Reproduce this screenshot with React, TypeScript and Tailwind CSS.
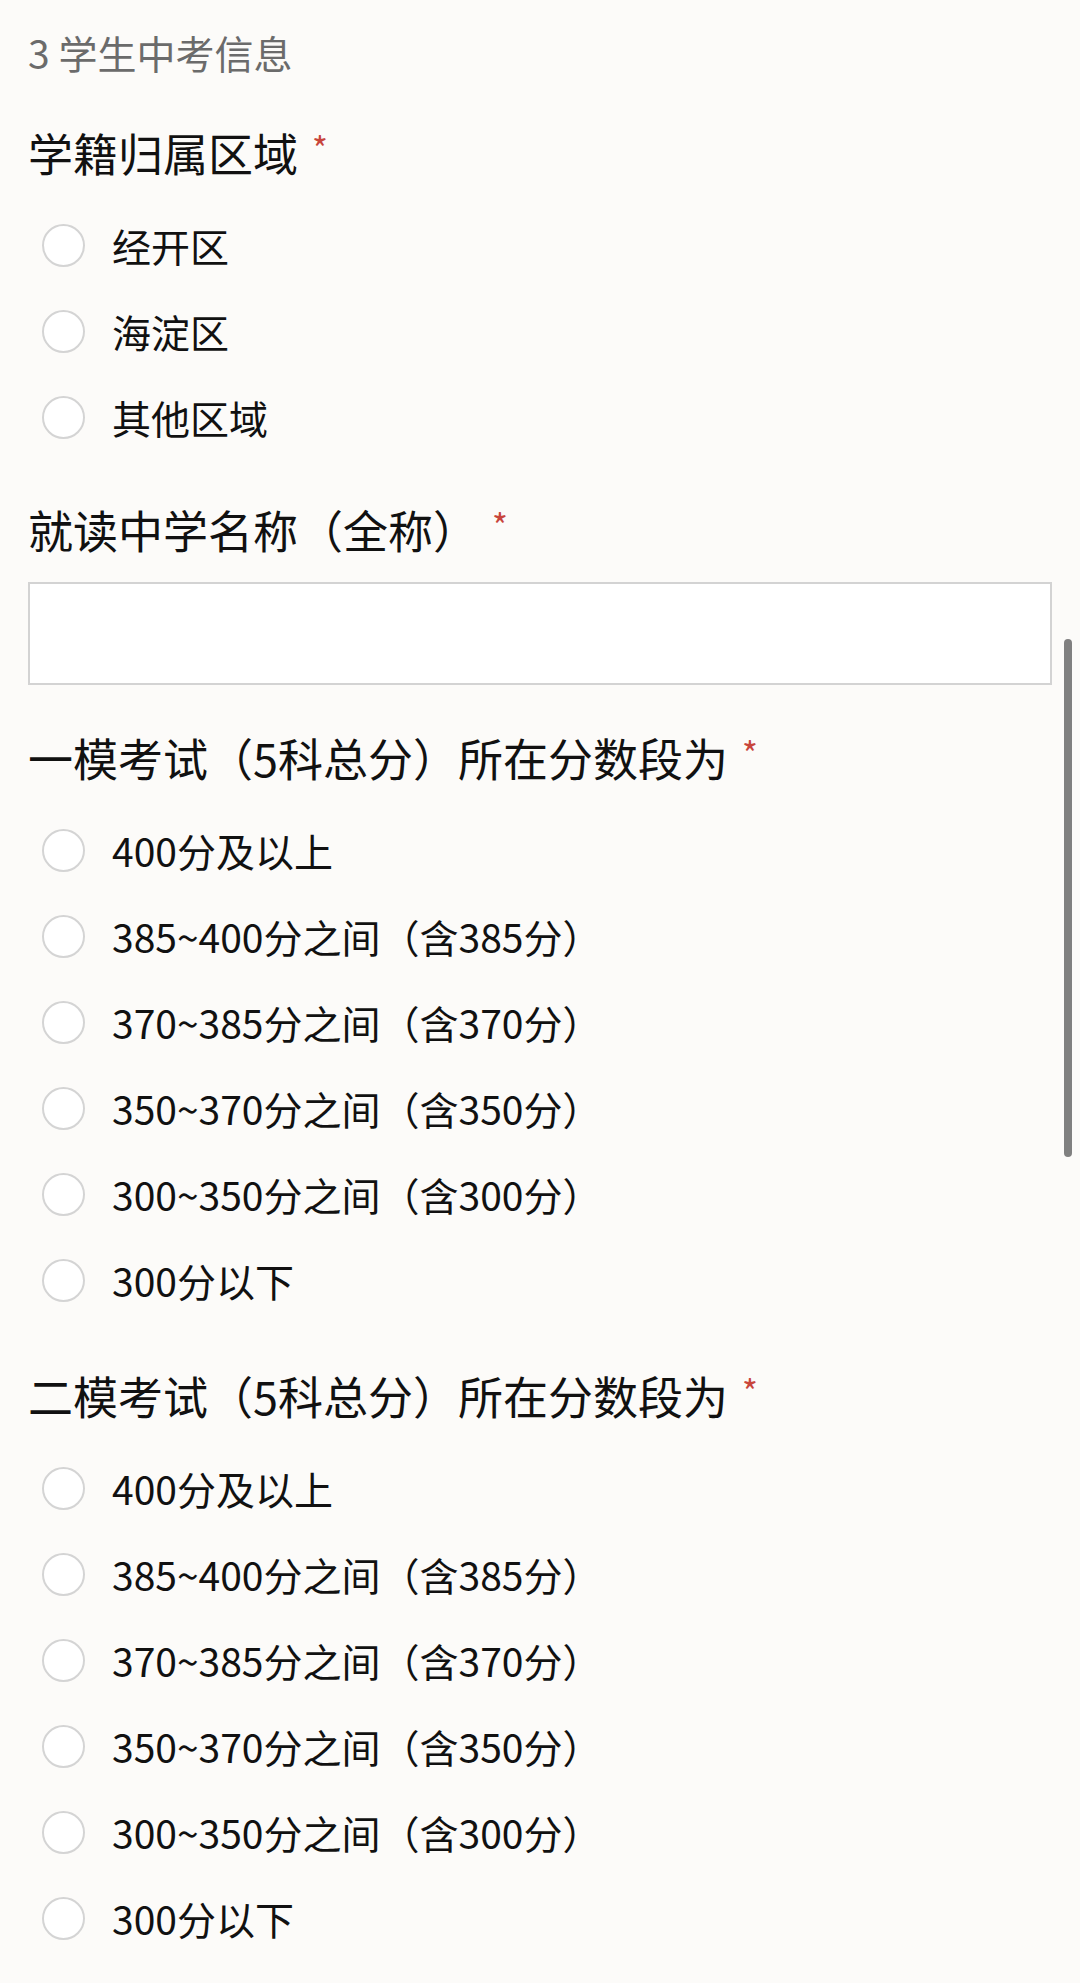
import React from "react";

type Question = {
    title: string;
    options?: string[];
    input?: boolean;
};

const scoreOptions = [
    "400分及以上",
    "385~400分之间（含385分）",
    "370~385分之间（含370分）",
    "350~370分之间（含350分）",
    "300~350分之间（含300分）",
    "300分以下",
];

const questions: Question[] = [
    { title: "学籍归属区域", options: ["经开区", "海淀区", "其他区域"] },
    { title: "就读中学名称（全称）", input: true },
    { title: "一模考试（5科总分）所在分数段为", options: scoreOptions },
    { title: "二模考试（5科总分）所在分数段为", options: scoreOptions },
];

const Radio: React.FC<{ label: string }> = ({ label }) => (
    <label className="flex items-center h-[86px] cursor-pointer">
        <span className="ml-[14px] w-[43px] h-[43px] rounded-full border-2 border-[#d4d4d4] bg-white shrink-0" />
        <span className="ml-[27px] text-[39px] text-[#111] leading-none">{label}</span>
    </label>
);

const App: React.FC = () => {
    return (
        <div
            className="relative min-h-[1983px] bg-[#fcfbf9] px-[28px] overflow-hidden"
            style={{ fontFamily: '"Noto Sans CJK SC", "Noto Sans", sans-serif' }}
        >
            <div className="h-[104px] flex items-center text-[39px] text-[#6b6b6b]">3 学生中考信息</div>

            {questions.map((q, i) => (
                <div key={i} className={i === 0 ? "mt-[2px]" : "mt-[26px]"}>
                    <div
                        className={`h-[96px] flex items-center text-[45px] text-[#111] whitespace-pre ${
                            q.input ? "pb-[8px]" : "pb-[2px]"
                        }`}
                    >
                        <span>{q.title}</span>
                        <span
                            className={`ml-[14px] self-start text-[34px] text-[#c8453c] leading-none ${
                                q.input ? "mt-[22px]" : "mt-[25px]"
                            }`}
                        >
                            *
                        </span>
                    </div>
                    {q.input && (
                        <div className="h-[103px] border-2 border-[#d3d3d3] bg-white" />
                    )}
                    {q.options?.map((o) => (
                        <Radio key={o} label={o} />
                    ))}
                </div>
            ))}

            {/* scrollbar */}
            <div className="absolute left-[1064px] top-[639px] w-[8px] h-[518px] rounded-full bg-[#808080]" />
        </div>
    );
};

export default App;
